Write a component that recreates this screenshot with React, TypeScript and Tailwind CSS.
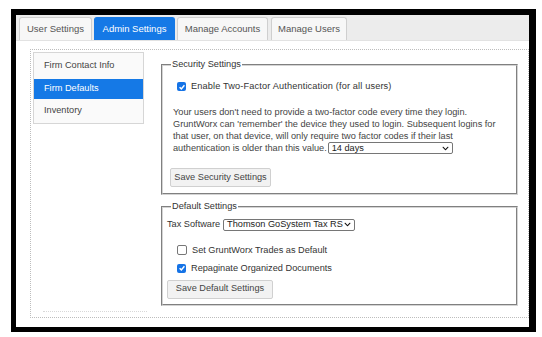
import { FaChevronDown } from "react-icons/fa";

function Tab({ label, active }: { label: string; active?: boolean }) {
  return (
    <div
      className={`h-[23px] flex items-center justify-center rounded-t-[3px] border border-b-0 text-[9.5px] ${
        active
          ? "bg-[#1579e6] border-[#1579e6] text-white"
          : "bg-[#f7f7f7] border-[#cfcfcf] text-[#555]"
      }`}
    >
      {label}
    </div>
  );
}

function Check({ on }: { on?: boolean }) {
  if (on) {
    return (
      <span className="w-[9px] h-[9px] rounded-[2px] bg-[#1573e6] flex items-center justify-center shrink-0">
        <svg viewBox="0 0 10 10" className="w-[8px] h-[8px]">
          <path d="M2 5.2 L4.2 7.3 L8 2.8" fill="none" stroke="white" strokeWidth="1.8" />
        </svg>
      </span>
    );
  }
  return <span className="w-[10px] h-[10px] rounded-[2px] border border-[#777] bg-white shrink-0" />;
}

function Select({ value, width }: { value: string; width: string }) {
  return (
    <span
      className={`${width} h-[12px] border border-[#767676] rounded-[2px] bg-white flex items-center justify-between pl-[3px] pr-[3px] text-[#222]`}
    >
      <span>{value}</span>
      <FaChevronDown size={7} className="text-[#111]" />
    </span>
  );
}

function Button({ label, width }: { label: string; width: string }) {
  return (
    <div
      className={`${width} h-[19px] border border-[#d0d0d0] rounded-[2px] bg-[#f2f2f2] flex items-center justify-center text-[#444]`}
    >
      {label}
    </div>
  );
}

export default function App() {
  return (
    <div
      className="w-[542px] h-[337px] bg-white pt-[9px] pl-[11px]"
      style={{ fontFamily: '"Liberation Sans", Arial, sans-serif' }}
    >
      <div className="w-[525px] h-[323px] border-black border-l-[5px] border-t-[6px] border-r-[7px] border-b-[5px] flex flex-col">
        {/* tabs */}
        <div className="h-[25px] bg-[#ececec] flex items-end pl-[3px] gap-[2px] shrink-0">
          <div className="w-[73px]">
            <Tab label="User Settings" />
          </div>
          <div className="w-[81px]">
            <Tab label="Admin Settings" active />
          </div>
          <div className="w-[91px]">
            <Tab label="Manage Accounts" />
          </div>
          <div className="w-[76px] ml-[1px]">
            <Tab label="Manage Users" />
          </div>
        </div>

        <div className="flex-1 bg-white border-t border-[#e2e2e2] pt-[8px] pl-[14px]">
          <div className="w-[499px] h-[269px] border border-dotted border-[#bdbdbd] flex text-[9.2px] text-[#333]">
            {/* left nav */}
            <div className="ml-[2px] mt-[2px] w-[111px] flex flex-col">
              <div className="border border-[#d6d6d6] bg-[#fafafa]">
                <div className="h-[26px] flex items-center pl-[10px] text-[#444]">Firm Contact Info</div>
                <div className="h-[20px] flex items-center pl-[10px] bg-[#1579e6] text-white">Firm Defaults</div>
                <div className="h-[24px] flex items-center pl-[10px] text-[#444]">Inventory</div>
              </div>
              <div className="mt-auto mb-[5px] ml-[10px] w-[104px] border-t border-dotted border-[#d8d8d8]" />
            </div>

            {/* settings */}
            <div className="ml-[17px] mt-[9px] w-[357px] flex flex-col gap-[6px]">
              <fieldset className="border-2 [border-style:groove] border-[#d4d4d4] pl-[10px] pr-[8px] pb-[5px] h-[136px]">
                <legend className="ml-[-2px] px-[1px] leading-[11px] text-[#333]">Security Settings</legend>
                <div className="flex items-center gap-[5px] ml-[4px] mt-[11px] leading-[11px]">
                  <Check on />
                  <span className="tracking-[0.15px]">Enable Two-Factor Authentication (for all users)</span>
                </div>
                <div className="mt-[14px] leading-[12px] text-[#444]">
                  Your users don't need to provide a two-factor code every time they login.
                  <br />
                  GruntWorx can 'remember' the device they used to login. Subsequent logins for
                  <br />
                  that user, on that device, will only require two factor codes if their last
                  <br />
                  <span className="flex items-center gap-[1px]">
                    <span>authentication is older than this value.</span>
                    <Select value="14 days" width="w-[125px]" />
                  </span>
                </div>
                <div className="mt-[14px] -ml-[3px]">
                  <Button label="Save Security Settings" width="w-[101px]" />
                </div>
              </fieldset>

              <fieldset className="border-2 [border-style:groove] border-[#d4d4d4] pl-[4px] pr-[8px] h-[105px]">
                <legend className="ml-[4px] px-[1px] leading-[11px] text-[#333]">Default Settings</legend>
                <div className="flex items-center gap-[3px] mt-[6px]">
                  <span>Tax Software</span>
                  <Select value="Thomson GoSystem Tax RS" width="w-[132px]" />
                </div>
                <div className="flex items-center gap-[5px] ml-[10px] mt-[13px] leading-[11px]">
                  <Check />
                  <span>Set GruntWorx Trades as Default</span>
                </div>
                <div className="flex items-center gap-[5px] ml-[10px] mt-[7px] leading-[11px]">
                  <Check on />
                  <span>Repaginate Organized Documents</span>
                </div>
                <div className="mt-[6px]">
                  <Button label="Save Default Settings" width="w-[106px]" />
                </div>
              </fieldset>
            </div>
          </div>
        </div>
      </div>
    </div>
  );
}
